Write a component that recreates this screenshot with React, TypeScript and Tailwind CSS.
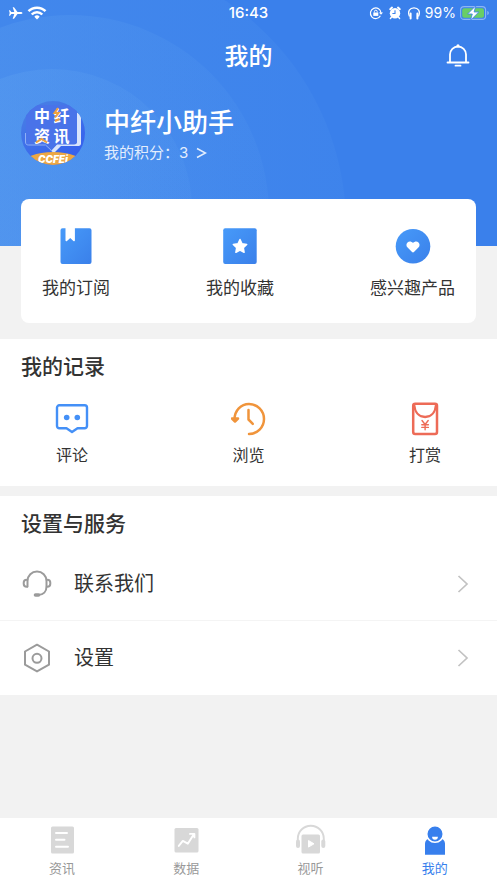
import type { ReactNode } from 'react';

interface Entry {
  label: string;
  icon: ReactNode;
}

function Gradient({ id }: { id: string }) {
  return (
    <defs>
      <linearGradient id={id} x1="0" y1="0" x2="1" y2="1">
        <stop offset="0" stopColor="#479af9" />
        <stop offset="1" stopColor="#3a80ea" />
      </linearGradient>
    </defs>
  );
}

function BookIcon() {
  return (
    <svg width="36" height="36" viewBox="0 0 36 36" aria-hidden="true">
      <Gradient id="book" />
      <path
        d="M4.500 0.300H7.500v12c0 1 .8 1.300 1.500.6l3.200-3 3.200 3c.7.7 1.500.4 1.500-.6V.3h14.600a2 2 0 0 1 2 2v31.700a2 2 0 0 1-2 2h-27a2 2 0 0 1-2-2v-31.700a2 2 0 0 1 2-2Z"
        fill="url(#book)"
      />
    </svg>
  );
}

function StarIcon() {
  return (
    <svg width="36" height="36" viewBox="0 0 36 36" aria-hidden="true">
      <Gradient id="star" />
      <rect x="1.200" y="0.300" width="33.500" height="35.700" rx="2" fill="url(#star)" />
      <path
        d="M18 11.500l2 4.300 4.700.6-3.400 3.300.8 4.600-4.100-2.200-4.100 2.200.8-4.600-3.400-3.300 4.700-.6Z"
        fill="#fff"
        stroke="#fff"
        strokeWidth="1.500"
        strokeLinejoin="round"
      />
    </svg>
  );
}

function HeartIcon() {
  return (
    <svg width="36" height="36" viewBox="0 0 36 36" aria-hidden="true">
      <Gradient id="heart" />
      <circle cx="18" cy="18.300" r="17.300" fill="url(#heart)" />
      <path
        d="M18 24.500c-.4 0-.8-.3-1.200-.7l-4.200-4.200c-1.500-1.500-1.600-3.900-.1-5.200 1.500-1.400 3.900-1.200 5.500.6 1.600-1.800 4-2 5.500-.6 1.500 1.300 1.400 3.700-.1 5.200l-4.200 4.200c-.4.4-.8.7-1.200.7Z"
        fill="#fff"
      />
    </svg>
  );
}

function CommentIcon() {
  return (
    <svg width="36" height="36" viewBox="0 0 36 36" fill="none" aria-hidden="true">
      <path
        d="M5.300 4.300h25.400a2.300 2.300 0 0 1 2.300 2.300v18.400a2.300 2.300 0 0 1-2.300 2.300h-7.200L18 31l-5.500-3.700H5.300A2.300 2.300 0 0 1 3 25V6.600a2.300 2.300 0 0 1 2.300-2.300Z"
        stroke="#4490f7"
        strokeWidth="2.400"
        strokeLinejoin="round"
      />
      <circle cx="12.700" cy="16.500" r="2.800" fill="#4490f7" />
      <circle cx="23.300" cy="16.500" r="2.800" fill="#4490f7" />
    </svg>
  );
}

function HistoryIcon() {
  return (
    <svg width="36" height="36" viewBox="0 0 36 36" fill="none" stroke="#f0943b" strokeWidth="2.500" strokeLinecap="round" strokeLinejoin="round" aria-hidden="true">
      <path d="M3.500 18.500C3.500 9.500 10 3 18 3a15 15 0 0 1 0 30" />
      <path d="M1 17.500h6L4 20.500Z" fill="#f0943b" />
      <path d="M17.500 9v9.500l4.300 4.300" />
    </svg>
  );
}

function RewardIcon() {
  return (
    <svg width="36" height="36" viewBox="0 0 36 36" fill="none" stroke="#ed6b57" strokeLinecap="round" strokeLinejoin="round" aria-hidden="true">
      <rect x="6.200" y="2.700" width="23.800" height="30.200" rx="2" strokeWidth="2.500" />
      <path d="M7.200 4c.7 7.500 5 12 10.900 12s10.200-4.500 10.900-12" strokeWidth="2.300" />
      <path d="m15 19.500 3.100 4 3.100-4M18.100 23.500v5.200M14.800 23.700h6.600M14.800 26.400h6.600" strokeWidth="1.400" />
    </svg>
  );
}

function HeadsetIcon() {
  return (
    <svg width="30" height="30" viewBox="0 0 30 30" fill="none" stroke="#9b9b9b" strokeWidth="2" strokeLinecap="round" aria-hidden="true">
      <path d="M5.500 17.500V12a9.500 9.500 0 0 1 19 0v5.500c0 5-3 8.500-8.500 8.500" />
      <path d="M5.200 10.800h-.5a3 3 0 0 0-3 3v1a3 3 0 0 0 3 3h.5M24.800 10.800h.5a3 3 0 0 1 3 3v1a3 3 0 0 1-3 3h-.5" />
      <path d="M13.500 26h3" strokeWidth="3.600" />
    </svg>
  );
}

function SettingsIcon() {
  return (
    <svg width="30" height="30" viewBox="0 0 30 30" fill="none" stroke="#9b9b9b" strokeWidth="2" strokeLinejoin="round" aria-hidden="true">
      <path d="M15 1.700 27 8.500v13.200l-12 6.700-12-6.700V8.500Z" />
      <circle cx="15" cy="15.300" r="4.500" />
    </svg>
  );
}

function NewsIcon() {
  return (
    <svg width="32" height="32" viewBox="0 0 32 32" aria-hidden="true">
      <rect x="5" y="3.500" width="23" height="27" rx="1.500" fill="#d8d8d8" />
      <path d="M10 10h11M10 16.800h8.500M10 23.800h12" stroke="#fff" strokeWidth="2" strokeLinecap="round" />
    </svg>
  );
}

function DataIcon() {
  return (
    <svg width="32" height="32" viewBox="0 0 32 32" aria-hidden="true">
      <rect x="4.500" y="5" width="24" height="24.500" rx="1.500" fill="#d8d8d8" />
      <path d="m8.800 22.900 4-5 5 2.800 6-9.500M20 10.900h4.400v3.500" fill="none" stroke="#fff" strokeWidth="1.900" strokeLinecap="round" strokeLinejoin="round" />
    </svg>
  );
}

function MediaIcon() {
  return (
    <svg width="32" height="32" viewBox="0 0 32 32" aria-hidden="true">
      <path d="M2.800 19v-3.300a13 13 0 0 1 26 0V19" fill="none" stroke="#d8d8d8" strokeWidth="1.900" />
      <rect x="1" y="16.500" width="4" height="8.500" rx="2" fill="#d8d8d8" />
      <rect x="26.300" y="16.500" width="4" height="8.500" rx="2" fill="#d8d8d8" />
      <rect x="6.500" y="11.500" width="18.500" height="19" rx="1.500" fill="#d8d8d8" />
      <path d="m13.500 17.500 5.500 3.300-5.500 3.300Z" fill="#fff" stroke="#fff" strokeLinejoin="round" />
    </svg>
  );
}

function MineIcon() {
  return (
    <svg width="32" height="32" viewBox="0 0 32 32" aria-hidden="true">
      <path d="M6 31.800V21c0-3.200 2-5.300 4.500-5.300h11c2.500 0 4.500 2.100 4.500 5.300v10.800Z" fill="#377fed" />
      <circle cx="16" cy="11" r="8.300" fill="#377fed" stroke="#fff" strokeWidth="1.600" />
      <path d="M13.100 13.800h5.800a2.900 2.900 0 0 1-5.800 0Z" fill="#fff" />
    </svg>
  );
}

function BellIcon() {
  return (
    <svg width="26" height="26" viewBox="0 0 26 26" fill="none" stroke="#fff" strokeWidth="1.800" strokeLinecap="round" aria-hidden="true">
      <path d="M2.500 18.500h21M5 18V10.500a8 8 0 0 1 16 0V18M10.500 21.700h5" />
      <circle cx="13" cy="1.900" r="1.600" fill="#fff" stroke="none" />
    </svg>
  );
}

function Chevron() {
  return (
    <svg width="12" height="20" viewBox="0 0 12 20" fill="none" stroke="#c2c2c2" strokeWidth="1.700" aria-hidden="true">
      <path d="m1.500 2 8.500 8-8.500 8" />
    </svg>
  );
}

function Avatar() {
  return (
    <svg width="64" height="64" viewBox="0 0 64 64" role="img" aria-label="头像">
      <defs>
        <clipPath id="avatar-clip">
          <circle cx="32" cy="32" r="32" />
        </clipPath>
        <linearGradient id="avatar-bg" x1="0" y1="0" x2="0.600" y2="1">
          <stop offset="0" stopColor="#4b83e4" />
          <stop offset="1" stopColor="#3560ee" />
        </linearGradient>
      </defs>
      <g clipPath="url(#avatar-clip)">
        <rect width="64" height="64" fill="url(#avatar-bg)" />
        <path d="M55 11 60 14V42.500c0 1.500-1 2.500-2.500 2.500H40l-7 7-3.500-2.500 6.500-6.500h17.500c1.500 0 2.500-1 2.500-2.500Z" fill="#d9e4fc" />
        <path d="M8 4h45c2 0 3 1 3 3v33.500c0 2-1 3-3 3H36l-5.500 6-6-6H8c-2 0-3-1-3-3V7c0-2 1-3 3-3Z" fill="#4973e9" />
        <path d="M4.500 32v9c0 2 1 3 3 3h17l6.500 6" fill="none" stroke="#8fb0f6" strokeWidth="1" />
        <g className="font-['Inter','Noto_Sans_CJK_SC',sans-serif] text-[16px] font-bold" fill="#fff">
          <text x="13" y="20.500">中</text>
          <text x="32.500" y="20.500">纤</text>
          <text x="13" y="40.500">资</text>
          <text x="32.500" y="40.500">讯</text>
        </g>
        <path d="m37 7-3.500 5h4l-3.500 4.500M34 20l4.500-2" fill="none" stroke="#efa13d" strokeWidth="2" />
        <path d="m15 41.500 5.500-3.500 5.500 3.500" fill="none" stroke="#efa13d" strokeWidth="2" />
        <ellipse cx="32" cy="63" rx="30" ry="12" fill="#eda744" />
        <text x="32" y="61.500" textAnchor="middle" fill="#fff" className="font-['Inter',sans-serif] text-[10px] font-black italic">
          CCFEi
        </text>
      </g>
    </svg>
  );
}

function StatusBar() {
  return (
    <div className="grid h-[26px] grid-cols-3 items-center px-2 text-[15px] leading-5">
      <div className="flex items-center gap-1">
        <svg width="15" height="14" viewBox="0 0 15 14" fill="#fff" aria-hidden="true">
          <path d="M14.500 7c0-.7-1-1.100-2-1.100H9.500L6 1.200H4.700L6.300 5.900H3.300L2 4.300H1L1.700 7 1 9.700h1l1.300-1.600h3L4.700 12.800H6L9.500 8.100h3c1 0 2-.4 2-1.100Z" />
        </svg>
        <svg width="20" height="14" viewBox="0 0 20 14" fill="none" stroke="#fff" strokeWidth="2.500" aria-hidden="true">
          <path d="M1.500 5.200a12 12 0 0 1 17 0M4.700 8.500a7.400 7.400 0 0 1 10.600 0" />
          <path d="m10 13.500-2.700-2.800a3.800 3.800 0 0 1 5.400 0Z" fill="#fff" stroke="none" />
        </svg>
      </div>
      <time className="text-center font-medium">16:43</time>
      <div className="flex items-center justify-end gap-1">
        <svg width="52" height="14" viewBox="0 0 52 14" fill="none" stroke="#fff" aria-hidden="true">
          <path d="M11.400 9.700A5.300 5.300 0 1 1 12 7" strokeWidth="1.200" />
          <path d="m9.900 6.600 2.100 2.200 2-2.200Z" fill="#fff" stroke="none" />
          <path d="M4.300 6.500h5v3.400h-5Z" fill="#fff" stroke="none" />
          <path d="M5.400 6.500V5.600a1.400 1.400 0 0 1 2.800 0v.9" />
          <circle cx="26" cy="7.200" r="5.200" fill="#fff" stroke="none" />
          <path d="M21.200 3.200 23 1.600M30.800 3.200 29 1.600" strokeWidth="2" strokeLinecap="round" />
          <path d="m22.400 11.200-1 1.300M29.600 11.200l1 1.300" strokeWidth="1.400" strokeLinecap="round" />
          <path d="M26 4.300v3.200h-2.600" stroke="#3b81eb" strokeWidth="1.100" />
          <path d="M40.500 10.500C38 5 41 1.800 45 1.800s7 3.200 4.500 8.700" strokeWidth="1.200" />
          <path d="M41.600 7.500v5M48.400 7.500v5" strokeWidth="2" strokeLinecap="round" />
        </svg>
        <span className="text-[14px]">99%</span>
        <svg width="29" height="16" viewBox="0 0 29 16" fill="none" aria-hidden="true">
          <rect x="0.600" y="1.600" width="25" height="12.800" rx="3.500" stroke="#8db6f4" strokeWidth="1.100" />
          <path d="M27.300 6v4c1-.3 1.500-1.100 1.500-2s-.5-1.700-1.500-2Z" fill="#8db6f4" />
          <rect x="2.200" y="3.200" width="21.800" height="9.600" rx="2" fill="#69ce65" />
          <path d="M15.800 0.800 7.600 9h4.700l-1.700 6.200 8.200-8.200h-4.700Z" fill="#fff" stroke="#3b81eb" strokeWidth="0.800" />
        </svg>
      </div>
    </div>
  );
}

const shortcuts: Entry[] = [
  { label: '我的订阅', icon: <BookIcon /> },
  { label: '我的收藏', icon: <StarIcon /> },
  { label: '感兴趣产品', icon: <HeartIcon /> },
];

const records: Entry[] = [
  { label: '评论', icon: <CommentIcon /> },
  { label: '浏览', icon: <HistoryIcon /> },
  { label: '打赏', icon: <RewardIcon /> },
];

const services: Entry[] = [
  { label: '联系我们', icon: <HeadsetIcon /> },
  { label: '设置', icon: <SettingsIcon /> },
];

const tabs: Entry[] = [
  { label: '资讯', icon: <NewsIcon /> },
  { label: '数据', icon: <DataIcon /> },
  { label: '视听', icon: <MediaIcon /> },
  { label: '我的', icon: <MineIcon /> },
];

function Rings() {
  return (
    <svg className="absolute top-0 left-0" width="360" height="247" aria-hidden="true">
      <defs>
        <linearGradient id="ring" x1="0" y1="0" x2="1" y2="0">
          <stop offset="0" stopColor="#b8f4ff" stopOpacity="0.080" />
          <stop offset="1" stopColor="#b8f4ff" stopOpacity="0.030" />
        </linearGradient>
      </defs>
      <circle cx="77" cy="225" r="269" fill="url(#ring)" />
      <circle cx="70" cy="214" r="199" fill="url(#ring)" />
      <circle cx="52" cy="209" r="140" fill="url(#ring)" />
    </svg>
  );
}

export default function App() {
  return (
    <div className="flex min-h-screen flex-col bg-[#f2f2f2] font-['Inter','Noto_Sans_CJK_SC',sans-serif] text-[#333]">
      <header className="relative overflow-hidden bg-[#3a80eb] pb-[81px] text-white">
        <Rings />
        <div className="relative">
          <StatusBar />
          <div className="grid h-[62px] grid-cols-3 items-center px-[26px]">
            <h1 className="col-start-2 text-center text-[24px] leading-9 font-medium">我的</h1>
            <button aria-label="消息" className="justify-self-end">
              <BellIcon />
            </button>
          </div>
          <div className="mt-[13px] flex items-end px-[21px]">
            <Avatar />
            <div className="ml-[19px]">
              <h2 className="text-[26px] leading-9 font-medium">中纤小助手</h2>
              <a href="#points" className="flex items-center gap-2 text-[15px] leading-6 text-[#e4eefd]">
                我的积分：3
                <svg width="11" height="12" viewBox="0 0 11 12" fill="none" stroke="currentColor" strokeWidth="1.500" aria-hidden="true">
                  <path d="M1 1.500 9.500 6 1 10.500" />
                </svg>
              </a>
            </div>
          </div>
        </div>
      </header>

      <main>
        <div className="relative mx-[21px] -mt-[47px] flex justify-between rounded-lg bg-white px-[21px] pt-[29px] pb-[23px]">
          {shortcuts.map((item) => (
            <button key={item.label} className="flex flex-col items-center gap-3">
              {item.icon}
              <span className="text-[17px] leading-6">{item.label}</span>
            </button>
          ))}
        </div>

        <section className="mt-4 bg-white pt-3.5 pb-[19px]">
          <h2 className="px-[21px] text-[21px] leading-7 font-medium">我的记录</h2>
          <div className="mt-5 flex justify-between px-[54px]">
            {records.map((item) => (
              <button key={item.label} className="flex flex-col items-center gap-1.5">
                {item.icon}
                <span className="text-[16px] leading-6">{item.label}</span>
              </button>
            ))}
          </div>
        </section>

        <section className="mt-2.5 bg-white pt-3.5">
          <h2 className="px-[21px] text-[21px] leading-7 font-medium">设置与服务</h2>
          <div className="mt-[9px] divide-y divide-[#f4f4f4]">
            {services.map((item) => (
              <button key={item.label} className="flex h-[74px] w-full items-center px-[22px] text-left">
                {item.icon}
                <span className="ml-[22px] flex-1 text-[20px] leading-7">{item.label}</span>
                <span className="mr-1.5">
                  <Chevron />
                </span>
              </button>
            ))}
          </div>
        </section>
      </main>

      <nav className="mt-auto grid grid-cols-4 bg-white pt-[5px] pb-1.5">
        {tabs.map((item) => (
          <a
            key={item.label}
            href={`#${item.label}`}
            aria-current={item.label === '我的' ? 'page' : undefined}
            className="flex flex-col items-center gap-1 text-[#999] aria-[current=page]:text-[#377fed]"
          >
            {item.icon}
            <span className="text-[13px] leading-[18px]">{item.label}</span>
          </a>
        ))}
      </nav>
    </div>
  );
}
